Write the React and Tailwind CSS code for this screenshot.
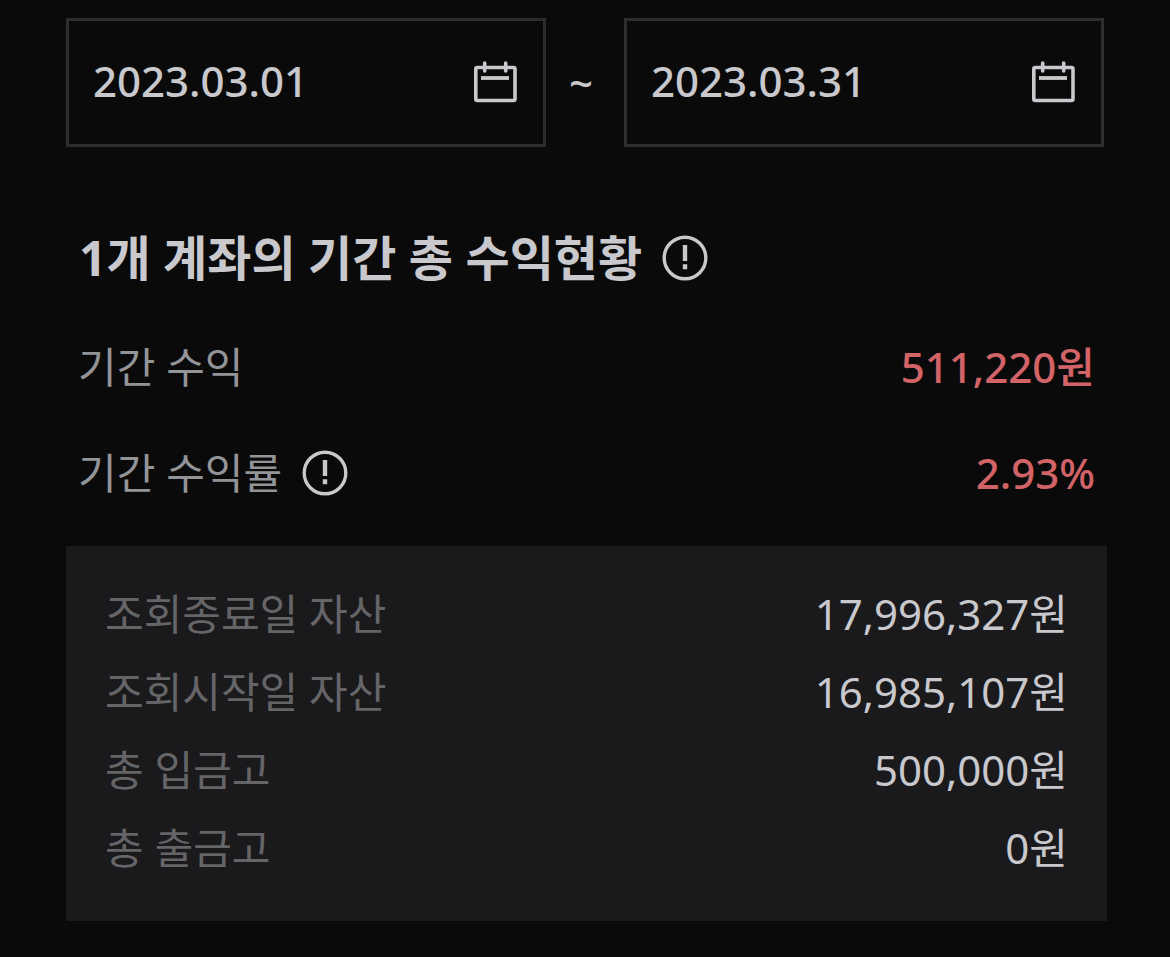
import React, { useState } from 'react';

const details = [
  { label: '조회종료일 자산', value: '17,996,327원' },
  { label: '조회시작일 자산', value: '16,985,107원' },
  { label: '총 입금고', value: '500,000원' },
  { label: '총 출금고', value: '0원' },
];

function CalendarIcon() {
  return (
    <svg width="44" height="44" viewBox="0 0 44 44" fill="none" stroke="#c8c8cd" strokeLinecap="round" aria-hidden="true">
      <rect x="2.8" y="8.5" width="39.2" height="33" rx="1.5" strokeWidth="3.6" />
      <path d="M11.7 4v8M32.7 4v8" strokeWidth="3.6" />
      <path d="M8 19h28" strokeWidth="3.8" strokeLinecap="butt" />
    </svg>
  );
}

function InfoButton({ label }) {
  return (
    <button type="button" aria-label={label} className="shrink-0">
      <svg width="46" height="46" viewBox="0 0 46 46" fill="none" stroke="#c8c8cd" className="block" aria-hidden="true">
        <circle cx="23" cy="23" r="20.8" strokeWidth="3.4" />
        <path d="M23 10v16M23 29.2v5" strokeWidth="4.4" />
      </svg>
    </button>
  );
}

function DateField({ label, value, onChange }) {
  return (
    <div className="flex h-[129px] min-w-0 flex-1 items-center border-3 border-[#2d2d2f] pr-[26px] pb-1 pl-6">
      <input
        type="text"
        aria-label={label}
        value={value}
        onChange={(e) => onChange(e.target.value)}
        className="w-full min-w-0 flex-1 bg-transparent font-medium outline-none"
      />
      <button type="button" aria-label={`${label} 선택`} className="shrink-0">
        <CalendarIcon />
      </button>
    </div>
  );
}

export default function App() {
  const [startDate, setStartDate] = useState('2023.03.01');
  const [endDate, setEndDate] = useState('2023.03.31');

  return (
    <main className="min-h-screen bg-[#0a0a0a] pt-[18px] pr-[63px] pb-9 pl-[66px] font-['Noto_Sans','Noto_Sans_CJK_KR',sans-serif] text-[42px] leading-[60px] text-[#c8c8cd]">
      <div className="flex items-center pr-[3px]">
        <DateField label="시작일" value={startDate} onChange={setStartDate} />
        <span className="w-[78px] pr-2 text-center font-medium">~</span>
        <DateField label="종료일" value={endDate} onChange={setEndDate} />
      </div>

      <section className="pt-[78px]">
        <div className="flex items-center gap-5 pl-[13px]">
          <h1 className="text-[48px] leading-[66px] font-bold">1개 계좌의 기간 총 수익현황</h1>
          <InfoButton label="기간 총 수익현황 안내" />
        </div>

        <dl className="mt-[46px] pr-3 pl-3">
          <div className="flex items-center justify-between">
            <dt className="text-[#929497]">기간 수익</dt>
            <dd className="font-medium text-[#d26367]">511,220원</dd>
          </div>
          <div className="mt-[46px] flex items-center justify-between">
            <dt className="flex items-center gap-5 text-[#929497]">
              기간 수익률
              <InfoButton label="기간 수익률 안내" />
            </dt>
            <dd className="font-medium text-[#d26367]">2.93%</dd>
          </div>
        </dl>

        <dl className="mt-[43px] flex flex-col gap-[18px] bg-[#1a1a1c] px-[39px] pt-[38px] pb-[43px]">
          {details.map((item) => (
            <div key={item.label} className="flex items-center justify-between">
              <dt className="text-[#656568]">{item.label}</dt>
              <dd>{item.value}</dd>
            </div>
          ))}
        </dl>
      </section>
    </main>
  );
}
